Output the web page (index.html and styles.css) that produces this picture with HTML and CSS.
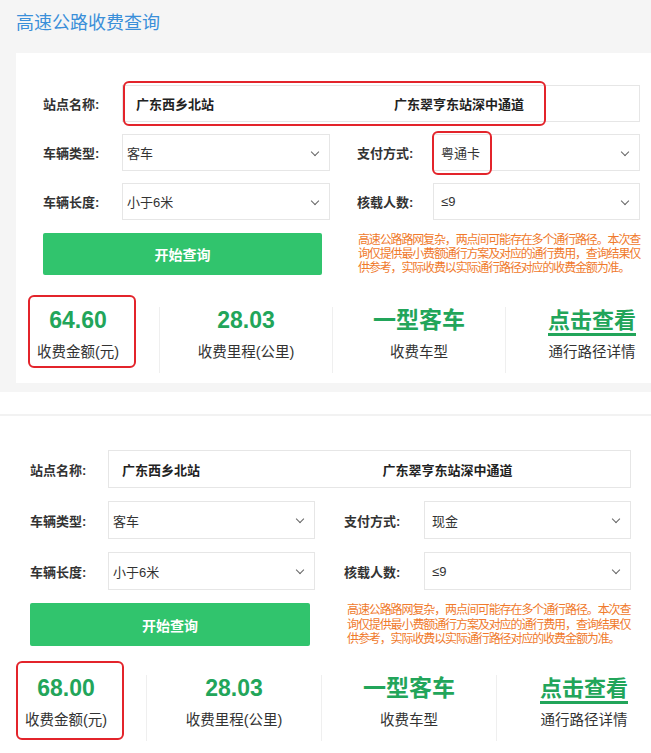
FILE: index.html
```html
<!DOCTYPE html>
<html lang="zh-CN">
<head>
    <meta charset="UTF-8">
    <meta name="viewport" content="width=device-width, initial-scale=1.0">
    <title>高速公路收费查询</title>
    <link rel="stylesheet" href="styles.css">
</head>
<body>

<!-- 查询一：粤通卡 -->
<div class="shot shot-top">
    <h1 class="page-title">高速公路收费查询</h1>
    <div class="panel">
        <div class="form-row">
            <span class="label">站点名称:</span>
            <div class="station-box">
                <span class="station">广东西乡北站</span>
                <span class="station">广东翠亨东站深中通道</span>
                <span class="mark mark-station"></span>
            </div>
        </div>
        <div class="form-row">
            <span class="label">车辆类型:</span>
            <div class="select">客车<span class="chevron"></span></div>
            <span class="label label-right">支付方式:</span>
            <div class="select select-right">粤通卡<span class="chevron"></span><span class="mark mark-pay"></span></div>
        </div>
        <div class="form-row">
            <span class="label">车辆长度:</span>
            <div class="select">小于6米<span class="chevron"></span></div>
            <span class="label label-right">核载人数:</span>
            <div class="select select-right">≤9<span class="chevron"></span></div>
        </div>
        <div class="actions">
            <button class="query-btn">开始查询</button>
            <p class="notice">高速公路路网复杂，两点间可能存在多个通行路径。本次查<br>询仅提供最小费额通行方案及对应的通行费用，查询结果仅<br>供参考，实际收费以实际通行路径对应的收费金额为准。</p>
        </div>
        <div class="stats">
            <div class="stat stat-first">
                <div class="stat-value">64.60</div>
                <div class="stat-label">收费金额(元)</div>
                <span class="mark mark-fee"></span>
            </div>
            <div class="stat">
                <div class="stat-value">28.03</div>
                <div class="stat-label">收费里程(公里)</div>
            </div>
            <div class="stat">
                <div class="stat-value">一型客车</div>
                <div class="stat-label">收费车型</div>
            </div>
            <div class="stat">
                <div class="stat-value"><span class="link">点击查看</span></div>
                <div class="stat-label">通行路径详情</div>
            </div>
        </div>
    </div>
</div>

<!-- 查询二：现金 -->
<div class="shot shot-bottom">
    <div class="panel">
        <div class="form-row">
            <span class="label">站点名称:</span>
            <div class="station-box">
                <span class="station">广东西乡北站</span>
                <span class="station">广东翠亨东站深中通道</span>
            </div>
        </div>
        <div class="form-row">
            <span class="label">车辆类型:</span>
            <div class="select">客车<span class="chevron"></span></div>
            <span class="label label-right">支付方式:</span>
            <div class="select select-right">现金<span class="chevron"></span></div>
        </div>
        <div class="form-row">
            <span class="label">车辆长度:</span>
            <div class="select">小于6米<span class="chevron"></span></div>
            <span class="label label-right">核载人数:</span>
            <div class="select select-right">≤9<span class="chevron"></span></div>
        </div>
        <div class="actions">
            <button class="query-btn">开始查询</button>
            <p class="notice">高速公路路网复杂，两点间可能存在多个通行路径。本次查<br>询仅提供最小费额通行方案及对应的通行费用，查询结果仅<br>供参考，实际收费以实际通行路径对应的收费金额为准。</p>
        </div>
        <div class="stats">
            <div class="stat stat-first">
                <div class="stat-value">68.00</div>
                <div class="stat-label">收费金额(元)</div>
                <span class="mark mark-fee"></span>
            </div>
            <div class="stat">
                <div class="stat-value">28.03</div>
                <div class="stat-label">收费里程(公里)</div>
            </div>
            <div class="stat">
                <div class="stat-value">一型客车</div>
                <div class="stat-label">收费车型</div>
            </div>
            <div class="stat">
                <div class="stat-value"><span class="link">点击查看</span></div>
                <div class="stat-label">通行路径详情</div>
            </div>
        </div>
    </div>
</div>

</body>
</html>
```

FILE: styles.css
```css
body {
    font-family: "Liberation Sans", "Noto Sans CJK SC", sans-serif;
    margin: 0;
    padding: 0;
    color: #333;
    background-color: #fff;
    width: 651px;
    overflow: hidden;
}

/* ---- 上半部分 ---- */
.shot-top {
    background-color: #f5f5f5;
    height: 392px;
    overflow: hidden;
}

.page-title {
    margin: 0;
    padding: 11px 0 0 16px;
    height: 53px;
    box-sizing: border-box;
    font-size: 18px;
    line-height: 24px;
    font-weight: normal;
    color: #3a8fd9;
}

.shot-top .panel {
    background-color: #fff;
    margin-left: 16px;
    height: 330px;
    padding: 32px 11px 0 27px;
    box-sizing: border-box;
}

/* ---- 下半部分 ---- */
.shot-bottom {
    height: 361px;
    border-top: 22px solid #fff;
    overflow: hidden;
}

.shot-bottom .panel {
    border-top: 2px solid #f2f2f2;
    padding: 34px 20px 0 30px;
}

/* ---- 表单 ---- */
.form-row {
    display: flex;
    align-items: center;
    height: 37px;
    margin-bottom: 12px;
}

.label {
    width: 79px;
    flex-shrink: 0;
    font-size: 13px;
    font-weight: bold;
    color: #333;
}

.label-right {
    width: 76px;
    margin-left: 27px;
}

.station-box, .select {
    position: relative;
    height: 100%;
    box-sizing: border-box;
    border: 1px solid #e6e6e6;
    display: flex;
    align-items: center;
    font-size: 13px;
}

.station-box {
    flex: 1;
}

.station {
    width: 50%;
    padding-left: 13px;
    box-sizing: border-box;
    font-weight: bold;
    color: #222;
}

.select {
    width: 208px;
    padding-left: 4px;
    color: #333;
}

.select-right {
    flex: 1;
    width: auto;
    padding-left: 7px;
}

.chevron {
    position: absolute;
    right: 11px;
    top: 14px;
    width: 5px;
    height: 5px;
    border-right: 1px solid #666;
    border-bottom: 1px solid #666;
    transform: rotate(45deg);
}

.actions {
    display: flex;
    align-items: flex-start;
    margin-top: 13px;
}

.query-btn {
    width: 279px;
    height: 42px;
    flex-shrink: 0;
    border: none;
    border-radius: 2px;
    background-color: #31c46d;
    color: #fff;
    font-family: inherit;
    font-size: 14px;
    font-weight: bold;
}

.notice {
    margin: 0 -10px 0 36px;
    font-size: 12px;
    letter-spacing: -1.15px;
    line-height: 14px;
    white-space: nowrap;
    color: #f07a2c;
}

/* ---- 结果 ---- */
.stats {
    display: flex;
    margin-top: 32px;
    margin-left: -27px;
}

.stat {
    position: relative;
    width: 172px;
    flex-shrink: 0;
    height: 66px;
    text-align: center;
    border-left: 1px solid #efefef;
}

.stat-first {
    width: 143px;
    padding-right: 19px;
    box-sizing: border-box;
    border-left: none;
}

.stat-value {
    font-size: 23px;
    line-height: 26px;
    font-weight: bold;
    color: #22a55a;
}

.link {
    display: inline-block;
    font-size: 22px;
    border-bottom: 3px solid #22a55a;
    line-height: 25px;
}

.stat-label {
    margin-top: 9px;
    font-size: 14.5px;
    line-height: 20px;
    color: #333;
}

.stat:last-child .stat-label {
    margin-top: 6px;
}

/* 红色标注框 */
.mark {
    position: absolute;
    border: 2px solid #e3242b;
    border-radius: 6px;
    box-sizing: border-box;
    pointer-events: none;
}

.mark-station {
    left: 0;
    top: -5px;
    width: 423px;
    height: 45px;
}

.mark-pay {
    left: -2px;
    top: -4px;
    width: 60px;
    height: 44px;
}

.mark-fee {
    left: 12px;
    top: -12px;
    width: 108px;
    height: 73px;
}

/* 下半部分尺寸略大 */
.shot-bottom .form-row {
    height: 38px;
    margin-bottom: 13px;
}

.shot-bottom .label {
    width: 78px;
}

.shot-bottom .label-right {
    width: 80px;
    margin-left: 29px;
}

.shot-bottom .select {
    width: 207px;
}

.shot-bottom .select-right {
    width: auto;
}

.shot-bottom .query-btn {
    width: 280px;
    height: 43px;
}

.shot-bottom .notice {
    margin-left: 37px;
    margin-right: -10px;
    letter-spacing: -1.1px;
    line-height: 14.5px;
}

.shot-bottom .stats {
    margin-left: -30px;
    margin-top: 28px;
}

.shot-bottom .stat {
    width: 174px;
}

.shot-bottom .stat-first {
    width: 146px;
    padding-right: 14px;
}

.shot-bottom .mark-fee {
    left: 16px;
    top: -14px;
    width: 108px;
    height: 79px;
}
```
